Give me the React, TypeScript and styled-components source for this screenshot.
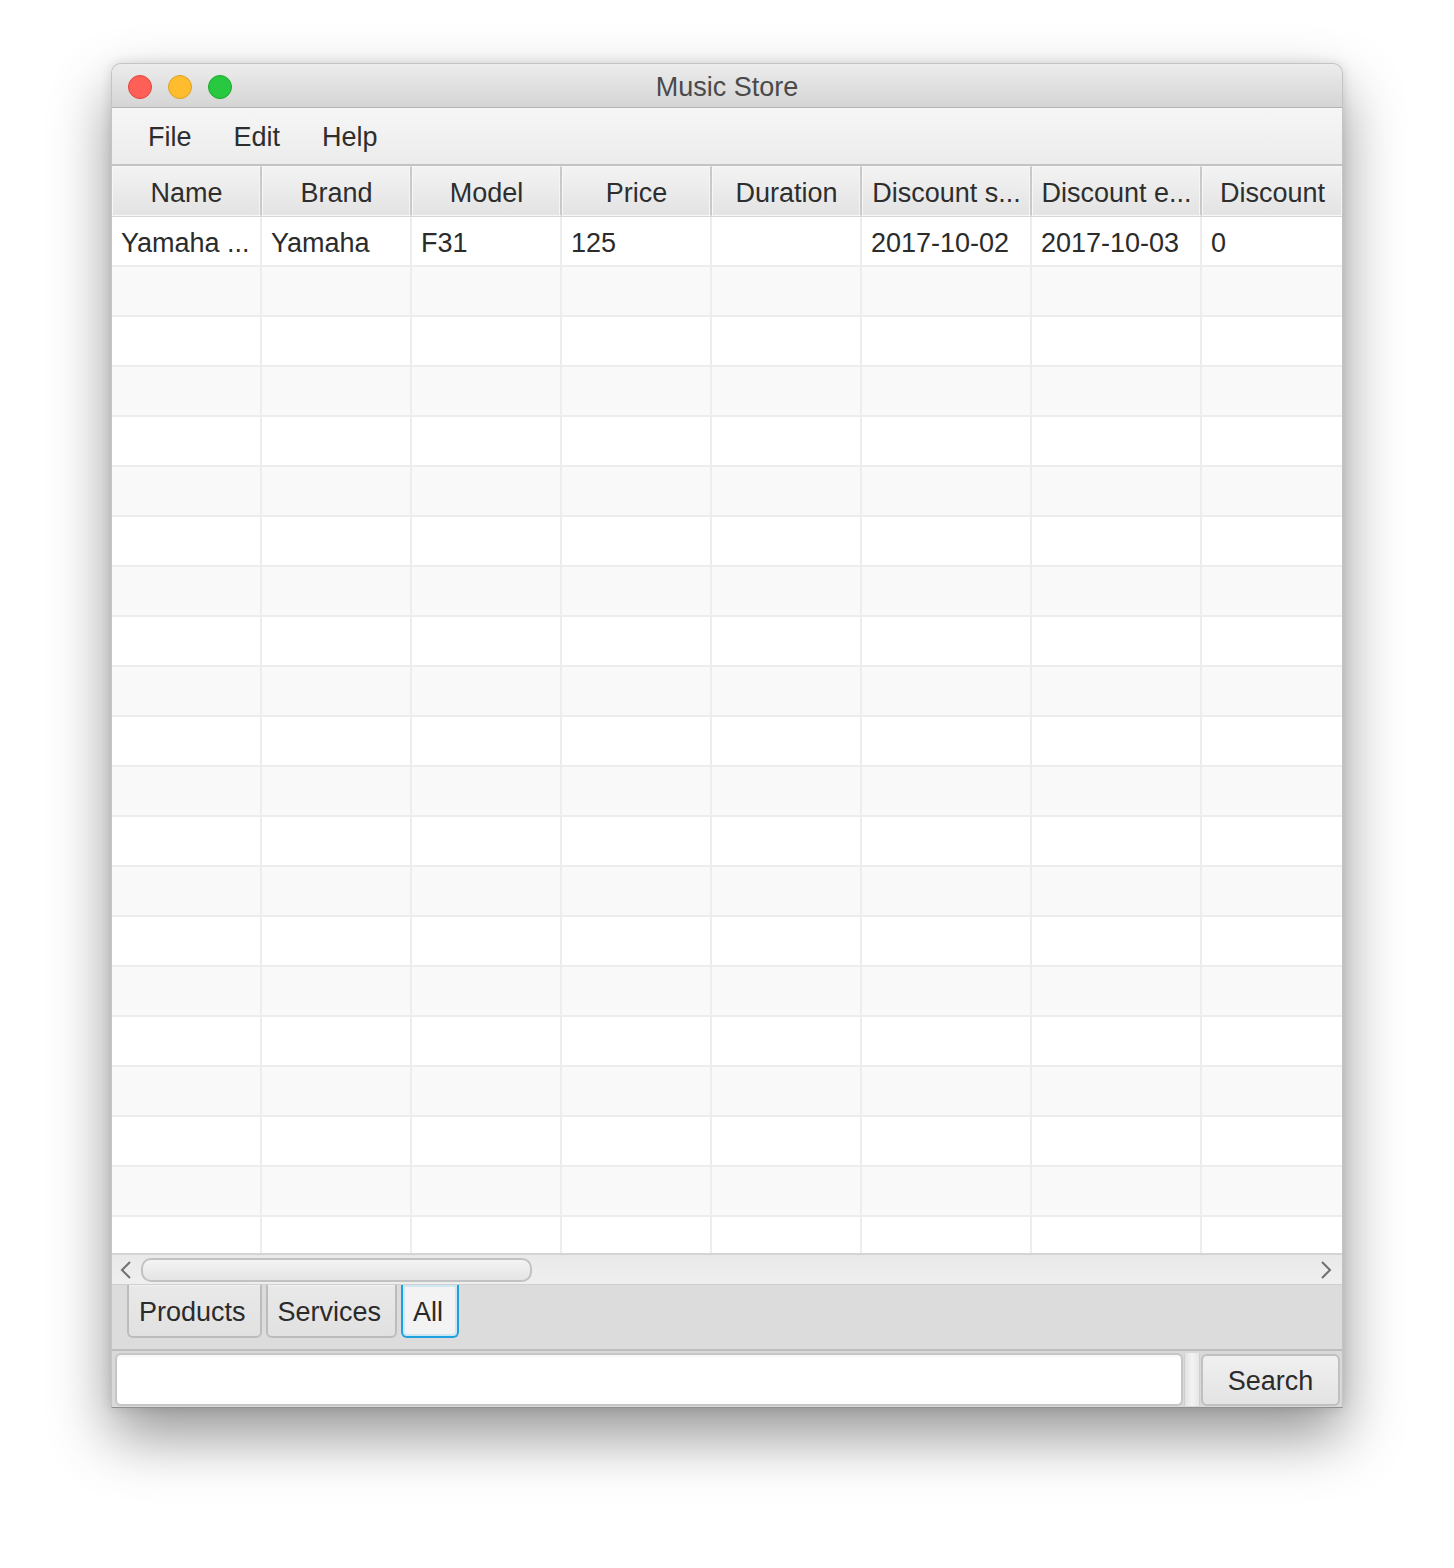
import React from "react";
import styled, { createGlobalStyle } from "styled-components";

const Global = createGlobalStyle`
  html, body { margin: 0; padding: 0; background: #ffffff; }
  body { font-family: "Liberation Sans", Arial, sans-serif; }
  * { box-sizing: border-box; }
`;

const Page = styled.div`
  padding: 63px 0 0 111px;
  width: 1454px;
  height: 1568px;
`;

const Window = styled.div`
  width: 1232px;
  height: 1345px;
  display: flex;
  flex-direction: column;
  border-radius: 10px 10px 0 0;
  border: 1px solid #c4c4c4;
  border-bottom-color: #8f8f8f;
  background: #dcdcdc;
  box-shadow: 0 28px 60px rgba(0, 0, 0, 0.42), 0 0 12px rgba(0, 0, 0, 0.12);
  overflow: hidden;
`;

const TitleBar = styled.div`
  height: 44px;
  flex: none;
  position: relative;
  display: flex;
  align-items: center;
  justify-content: center;
  background: linear-gradient(#ececec, #d5d5d5);
  border-bottom: 1px solid #b4b4b4;
`;

const Lights = styled.div`
  position: absolute;
  left: 16px;
  top: 11px;
  display: flex;
  gap: 16px;
`;

const Light = styled.span<{ $c: string; $b: string }>`
  width: 24px;
  height: 24px;
  border-radius: 50%;
  background: ${(p) => p.$c};
  border: 1px solid ${(p) => p.$b};
`;

const Title = styled.div`
  font-size: 27px;
  color: #4a4a4a;
  padding-top: 3px;
`;

const MenuBar = styled.div`
  height: 58px;
  flex: none;
  display: flex;
  align-items: center;
  padding-left: 15px;
  padding-top: 2px;
  background: linear-gradient(#f6f6f6, #ececec);
  border-bottom: 2px solid #c3c3c3;
`;

const MenuItem = styled.div`
  font-size: 27px;
  color: #2e2e2e;
  padding: 0 21px;
`;

const COLS = "150px 150px 150px 150px 150px 170px 170px 1fr";

const Header = styled.div`
  display: grid;
  grid-template-columns: ${COLS};
  height: 51px;
  flex: none;
  background: #c8c8c8;
  border-bottom: 1px solid #d6d6d6;
`;

const HeadCell = styled.div`
  display: flex;
  align-items: center;
  justify-content: center;
  font-size: 27px;
  color: #2e2e2e;
  white-space: nowrap;
  overflow: hidden;
  background: linear-gradient(#f3f3f3, #e3e3e3);
  border: 1px solid #f7f7f7;
  border-right: 2px solid #c9c9c9;
  box-shadow: inset -1px 0 0 #f5f5f5;
  padding-top: 4px;
  &:last-child { border-right: none; }
`;

const Body = styled.div`
  flex: 1;
  min-height: 0;
  overflow: hidden;
  background: #ffffff;
`;

const Row = styled.div<{ $alt: boolean }>`
  display: grid;
  grid-template-columns: ${COLS};
  height: 50px;
  background: ${(p) => (p.$alt ? "#f9f9f9" : "#ffffff")};
  border-bottom: 2px solid #ededed;
`;

const Cell = styled.div`
  display: flex;
  align-items: center;
  padding: 4px 9px 0 9px;
  font-size: 27px;
  color: #2b2b2b;
  white-space: nowrap;
  overflow: hidden;
  border-right: 2px solid #ededed;
  &:last-child { border-right: none; }
`;

const ScrollBar = styled.div`
  height: 32px;
  flex: none;
  display: flex;
  align-items: center;
  background: linear-gradient(#e9e9e9, #efefef);
  border-top: 2px solid #d4d4d4;
  border-bottom: 1px solid #cfcfcf;
  padding: 0 6px 0 4px;
`;

const Arrow = styled.div`
  width: 20px;
  height: 24px;
  display: flex;
  align-items: center;
  justify-content: center;
  flex: none;
`;

const Track = styled.div`
  flex: 1;
  display: flex;
  align-items: center;
  padding: 0 6px 0 5px;
`;

const Thumb = styled.div`
  width: 391px;
  height: 24px;
  border-radius: 10px;
  border: 2px solid #c2c2c2;
  background: linear-gradient(#f4f4f4, #e4e4e4);
`;

const Tabs = styled.div`
  height: 66px;
  flex: none;
  display: flex;
  align-items: flex-start;
  gap: 4px;
  padding-left: 15px;
  background: #dcdcdc;
  border-bottom: 2px solid #bdbdbd;
`;

const TabButton = styled.div<{ $active?: boolean }>`
  height: 53px;
  display: flex;
  align-items: center;
  padding: 3px 14px 0 10px;
  font-size: 27px;
  color: #2b2b2b;
  border-radius: 0 0 6px 6px;
  border: ${(p) => (p.$active ? "2px solid #1f9fdc" : "2px solid #bcbcbc")};
  border-top: none;
  background: ${(p) => (p.$active ? "#f3f3f3" : "linear-gradient(#e9e9e9, #e1e1e1)")};
  box-shadow: ${(p) => (p.$active ? "inset 0 0 0 2px #cde7f3" : "inset 0 1px 0 #f2f2f2")};
`;

const SearchRow = styled.div`
  height: 56px;
  flex: none;
  display: flex;
  align-items: stretch;
  padding: 2px 2px 1px 3px;
  background: #d9d9d9;
`;

const Field = styled.div`
  flex: 1;
  border: 2px solid #c6c6c6;
  border-radius: 6px;
  background: #ffffff;
  box-shadow: inset 0 2px 2px rgba(0, 0, 0, 0.04);
`;

const Splitter = styled.div`
  width: 16px;
  flex: none;
  margin: 0 1px;
  background: linear-gradient(90deg, #e3e3e3, #f3f3f3 50%, #e6e6e6);
  border-left: 1px solid #cfcfcf;
  border-right: 1px solid #cfcfcf;
`;

const SearchButton = styled.div`
  width: 139px;
  flex: none;
  display: flex;
  align-items: center;
  justify-content: center;
  font-size: 27px;
  color: #2b2b2b;
  padding-top: 3px;
  margin: 1px 0 0 0;
  border: 2px solid #c0c0c0;
  border-radius: 6px;
  background: linear-gradient(#f0f0f0, #e3e3e3);
`;

const headers = [
  "Name",
  "Brand",
  "Model",
  "Price",
  "Duration",
  "Discount s...",
  "Discount e...",
  "Discount",
];

const firstRow = [
  "Yamaha ...",
  "Yamaha",
  "F31",
  "125",
  "",
  "2017-10-02",
  "2017-10-03",
  "0",
];

const Chevron = ({ dir }: { dir: "l" | "r" }) => (
  <svg width="12" height="20" viewBox="0 0 12 20">
    <path
      d={dir === "l" ? "M10 2 L2 10 L10 18" : "M2 2 L10 10 L2 18"}
      fill="none"
      stroke="#6f6f6f"
      strokeWidth="2"
    />
  </svg>
);

export default function App() {
  const rows = Array.from({ length: 21 }, (_, i) => i);
  return (
    <>
      <Global />
      <Page>
        <Window>
          <TitleBar>
            <Lights>
              <Light $c="#fe5f57" $b="#e0443e" />
              <Light $c="#febc2e" $b="#dea123" />
              <Light $c="#28c840" $b="#1aab29" />
            </Lights>
            <Title>Music Store</Title>
          </TitleBar>
          <MenuBar>
            <MenuItem>File</MenuItem>
            <MenuItem>Edit</MenuItem>
            <MenuItem>Help</MenuItem>
          </MenuBar>
          <Header>
            {headers.map((h) => (
              <HeadCell key={h}>{h}</HeadCell>
            ))}
          </Header>
          <Body>
            {rows.map((r) => (
              <Row key={r} $alt={r % 2 === 1}>
                {headers.map((h, c) => (
                  <Cell key={h}>{r === 0 ? firstRow[c] : ""}</Cell>
                ))}
              </Row>
            ))}
          </Body>
          <ScrollBar>
            <Arrow>
              <Chevron dir="l" />
            </Arrow>
            <Track>
              <Thumb />
            </Track>
            <Arrow>
              <Chevron dir="r" />
            </Arrow>
          </ScrollBar>
          <Tabs>
            <TabButton>Products</TabButton>
            <TabButton>Services</TabButton>
            <TabButton $active>All</TabButton>
          </Tabs>
          <SearchRow>
            <Field />
            <Splitter />
            <SearchButton>Search</SearchButton>
          </SearchRow>
        </Window>
      </Page>
    </>
  );
}
